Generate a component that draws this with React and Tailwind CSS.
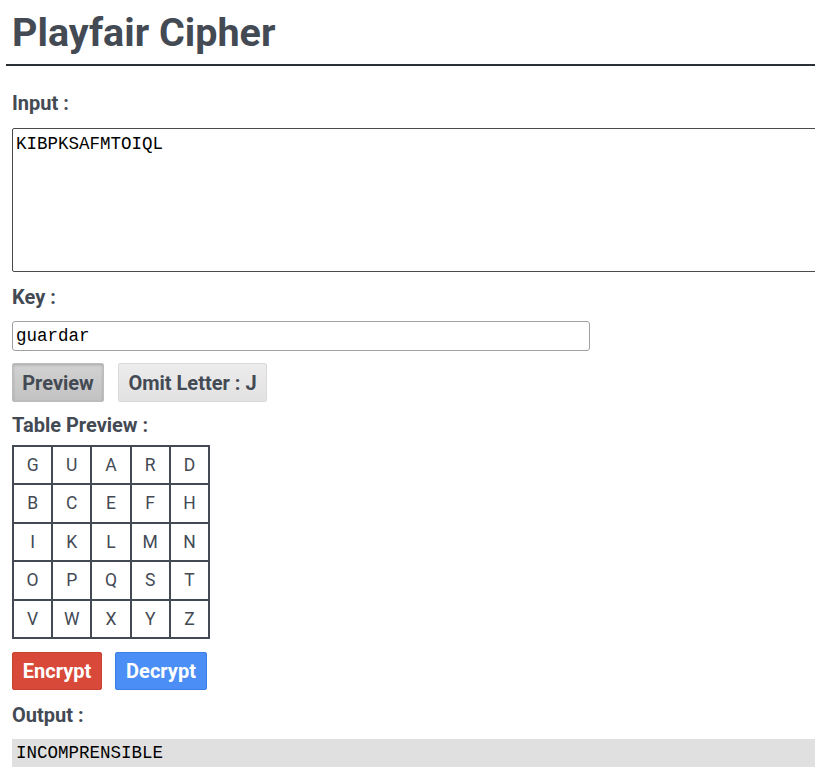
import React, { useState } from "react";

const TABLE = [
  ["G", "U", "A", "R", "D"],
  ["B", "C", "E", "F", "H"],
  ["I", "K", "L", "M", "N"],
  ["O", "P", "Q", "S", "T"],
  ["V", "W", "X", "Y", "Z"],
];

const labelCls = "text-[20px] leading-[23px] font-bold text-[#434a54]";
const monoFont = { fontFamily: '"Liberation Mono", "Courier New", monospace' };

export default function App() {
  const [input, setInput] = useState("KIBPKSAFMTOIQL");
  const [key, setKey] = useState("guardar");

  return (
    <div
      className="w-[815px] min-h-[767px] overflow-hidden bg-white text-[#434a54]"
      style={{ fontFamily: 'Roboto, "Liberation Sans", Arial, sans-serif' }}
    >
      {/* Title */}
      <h1 className="ml-[6px] pl-[6px] pt-[11px] pb-[9px] border-b-2 border-[#2b3036] text-[39.5px] leading-[44px] font-bold text-[#434a54]">
        Playfair Cipher
      </h1>

      <div className="flex flex-col items-start px-[12px]">
        <label className={`${labelCls} mt-[26px]`}>Input :</label>
        <textarea
          value={input}
          onChange={(e) => setInput(e.target.value)}
          className="mt-[13px] w-[830px] h-[144px] shrink-0 border border-[#4a4a4a] rounded-[2px] px-[3px] py-[5px] text-[17.5px] leading-[20px] text-black resize-none outline-none"
          style={monoFont}
        />

        <label className={`${labelCls} mt-[14px]`}>Key :</label>
        <input
          value={key}
          onChange={(e) => setKey(e.target.value)}
          className="mt-[12px] w-[578px] h-[30px] border border-[#a0a0a0] rounded-[3px] px-[3px] text-[17.5px] text-black outline-none"
          style={monoFont}
        />

        <div className="mt-[12px] flex gap-[14px]">
          <button className="w-[92px] h-[39px] rounded-[2px] border border-[#bdbdbd] bg-gradient-to-b from-[#d2d2d2] to-[#c2c2c2] shadow-[inset_0_1px_3px_rgba(0,0,0,0.2)] text-[20px] font-bold text-[#434a54]">
            Preview
          </button>
          <button className="w-[149px] h-[39px] rounded-[2px] border border-[#dadada] bg-gradient-to-b from-[#ececec] to-[#e2e2e2] text-[20px] font-bold text-[#434a54]">
            Omit Letter : J
          </button>
        </div>

        <label className={`${labelCls} mt-[12px]`}>Table Preview :</label>
        <div className="mt-[8px] grid grid-cols-5 grid-rows-5 gap-[2px] p-[2px] w-[198px] h-[194px] bg-[#434a54]">
          {TABLE.flat().map((ch, i) => (
            <div
              key={i}
              className="bg-white flex items-center justify-center text-[17.5px] text-[#434a54]"
            >
              {ch}
            </div>
          ))}
        </div>

        <div className="mt-[13px] flex gap-[13px]">
          <button className="w-[90px] h-[38px] rounded-[2px] border border-[#c9412f] bg-[#d9493a] text-[20px] font-bold text-white">
            Encrypt
          </button>
          <button className="w-[92px] h-[38px] rounded-[2px] border border-[#3b7fe6] bg-[#4b8ef5] text-[20px] font-bold text-white">
            Decrypt
          </button>
        </div>

        <label className={`${labelCls} mt-[14px]`}>Output :</label>
        <div
          className="mt-[12px] w-[830px] px-[4px] pt-[4px] pb-[6px] bg-[#e0e0e0] text-[17.5px] leading-[20px] text-black"
          style={monoFont}
        >
          INCOMPRENSIBLE
        </div>
      </div>
    </div>
  );
}
